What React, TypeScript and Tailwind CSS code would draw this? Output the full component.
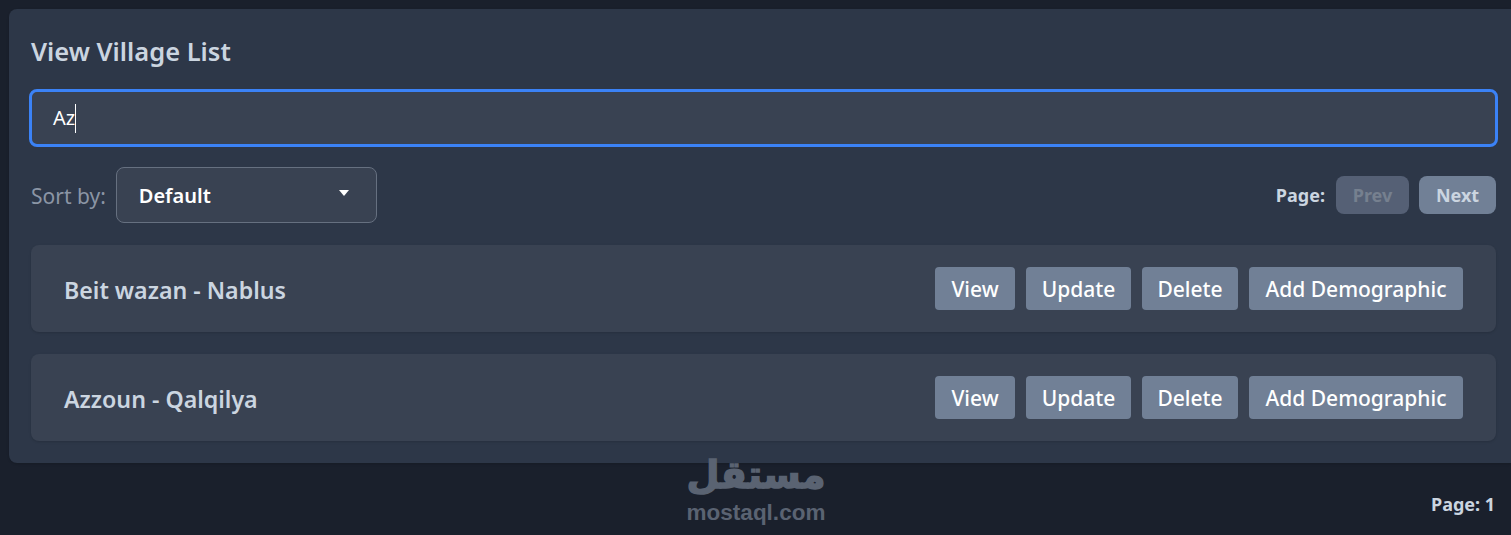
const font = { fontFamily: '"Noto Sans", "Open Sans", sans-serif' };

function Row({ name }: { name: string }) {
  return (
    <div className="h-[87px] rounded-lg bg-[#394252] pl-[33px] pr-[33px] flex items-center justify-between shadow-sm">
      <span className="text-[23.2px] font-semibold text-[#cbd5e0] pt-[4px]">{name}</span>
      <div className="flex gap-[11px]">
        {[
          ["View", "w-[80px]"],
          ["Update", "w-[105px]"],
          ["Delete", "w-[96px]"],
          ["Add Demographic", "w-[214px]"],
        ].map(([t, w]) => (
          <button key={t} className={`${w} h-[43px] pt-[2px] rounded bg-[#718096] text-white text-[21px] font-medium`}>
            {t}
          </button>
        ))}
      </div>
    </div>
  );
}

export default function App() {
  return (
    <div style={font} className="relative h-[535px] w-[1511px] overflow-hidden bg-[#1a202c] pl-[9px] pt-[9px]">
      <div className="w-[1509px] h-[454px] rounded-lg bg-[#2d3748] pl-[22px] pr-[22px] pt-[22px] shadow">
        <h2 className="text-[25.5px] leading-[40px] font-semibold text-[#cbd5e0]">View Village List</h2>
        <div className="mt-[18px] -ml-[2px] mr-[-2px] h-[58px] rounded-lg border-[3px] border-[#3b82f6] bg-[#394252] pl-[21px] flex items-center text-[20px] text-white">
          <span>Az</span>
          <span className="w-px h-[29px] bg-white" />
        </div>
        <div className="mt-[20px] flex items-center justify-between h-[56px]">
          <div className="flex items-center gap-[10px]">
            <span className="text-[21px] text-[#8b95a5] pt-[4px]">Sort by:</span>
            <div className="w-[261px] h-[56px] rounded-lg border border-[#667080] bg-[#394252] pl-[22px] pr-[27px] flex items-center justify-between">
              <span className="text-[20px] font-semibold text-white pt-[2px]">Default</span>
              <span className="w-0 h-0 border-x-[5.5px] border-x-transparent border-t-[6px] border-t-white -mt-1" />
            </div>
          </div>
          <div className="flex items-center">
            <span className="text-[18px] font-bold text-[#cbd5e0] mr-[11px]">Page:</span>
            <button className="w-[73px] h-[38px] rounded-lg bg-[#556075] text-[#76808f] text-[18px] font-bold mr-[10px]">Prev</button>
            <button className="w-[77px] h-[38px] rounded-lg bg-[#718096] text-[#cbd5e0] text-[18px] font-bold">Next</button>
          </div>
        </div>
        <div className="mt-[22px] flex flex-col gap-[22px]">
          <Row name="Beit wazan - Nablus" />
          <Row name="Azzoun - Qalqilya" />
        </div>
      </div>
      <div className="absolute left-[686px] top-[451px] w-[140px] text-center text-[#5a6372] pointer-events-none">
        <div className="text-[38px] leading-[49px] font-bold whitespace-nowrap [-webkit-text-stroke:1.5px_#5a6372]" dir="rtl" style={{ fontFamily: '"DejaVu Sans", sans-serif' }}>مستقل</div>
        <div className="text-[22.5px] leading-[26px] font-bold whitespace-nowrap" style={{ fontFamily: '"Liberation Sans", sans-serif' }}>mostaql.com</div>
      </div>
      <span className="absolute left-[1431px] top-[491px] text-[18px] font-bold text-[#cbd5e0]">Page: 1</span>
    </div>
  );
}
